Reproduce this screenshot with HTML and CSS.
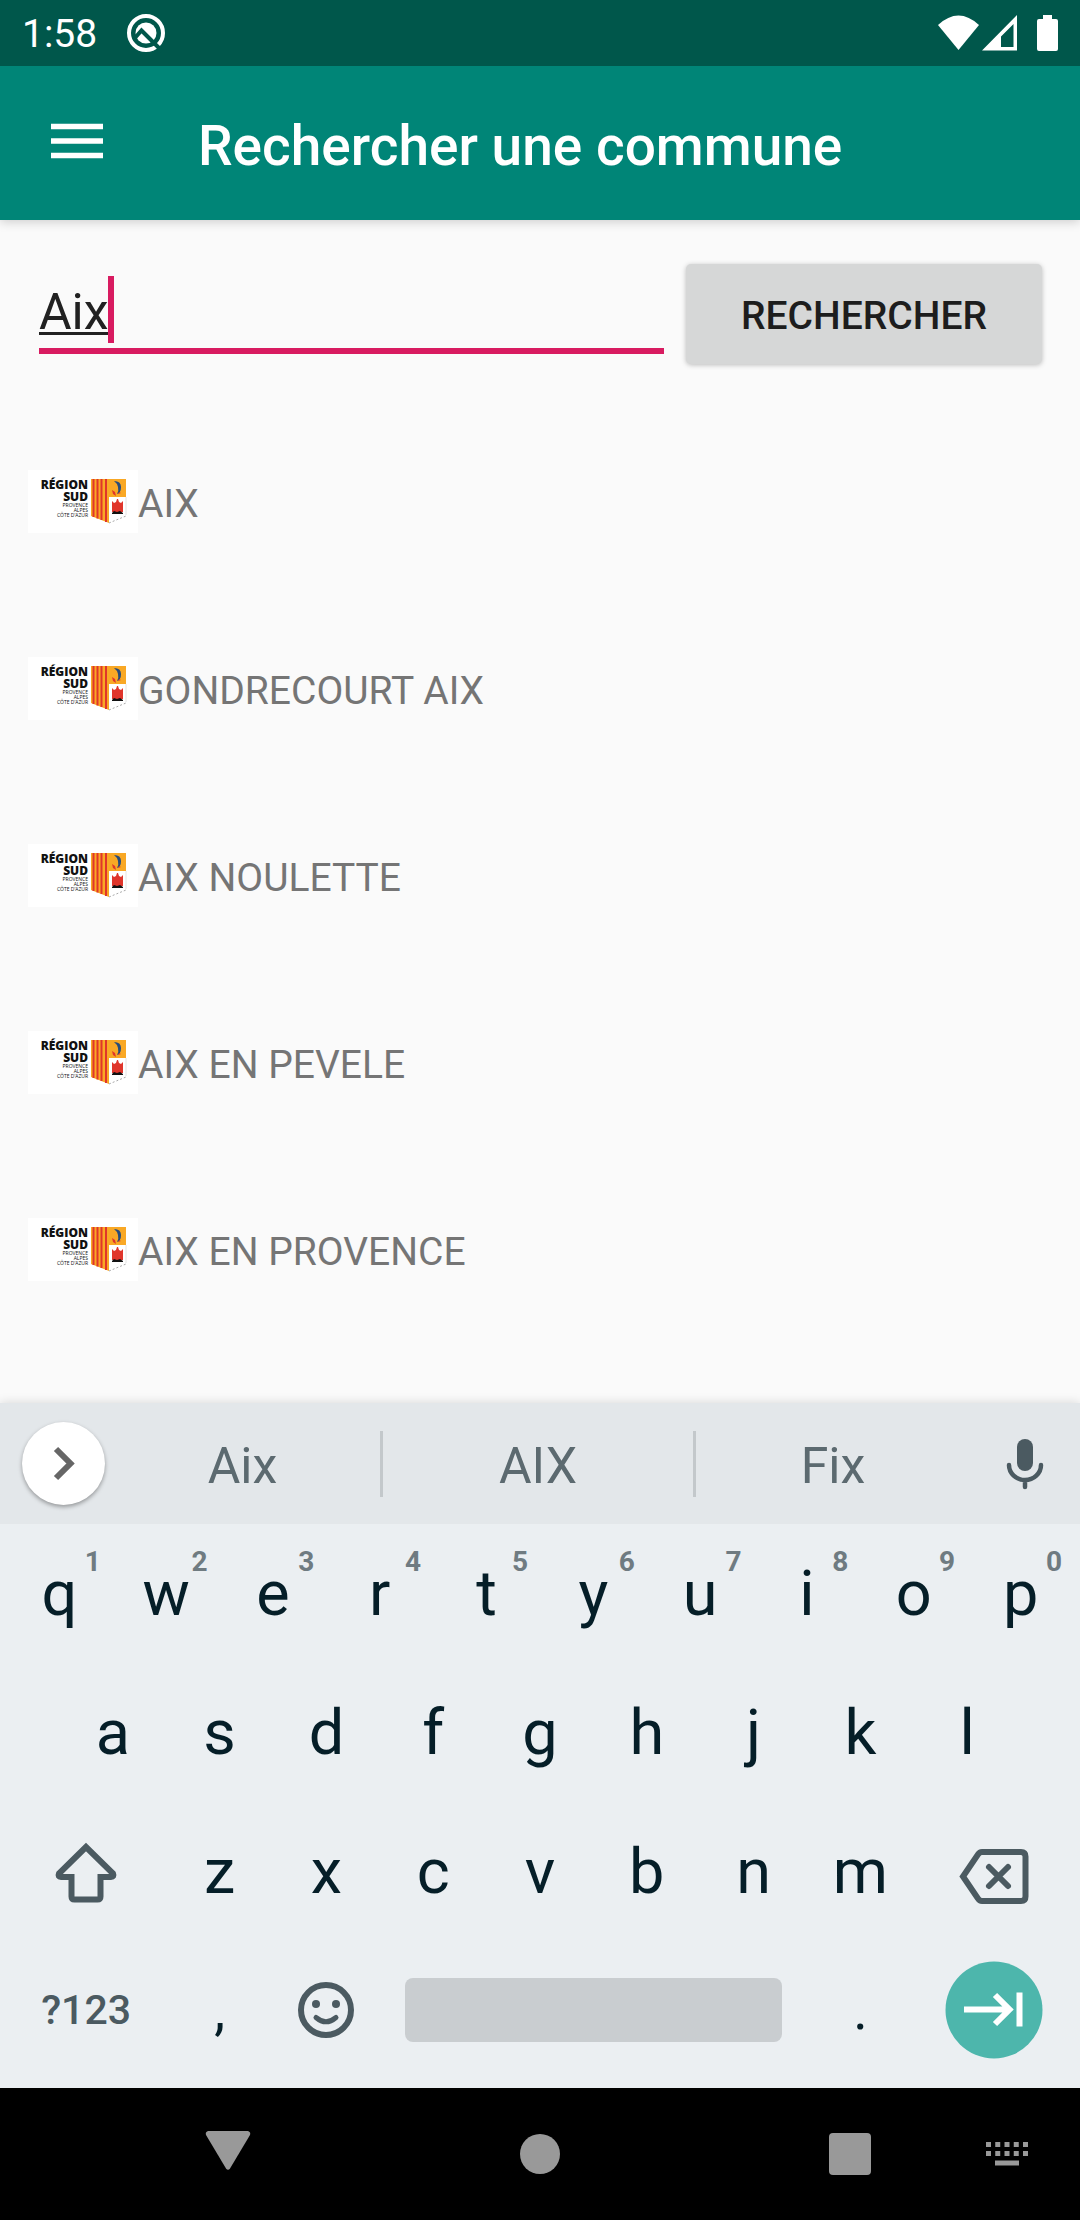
FILE: index.html
```html
<!DOCTYPE html>
<html lang="fr">
<head>
<meta charset="utf-8">
<meta name="viewport" content="width=device-width">
<title>Rechercher une commune</title>
<link rel="stylesheet" href="styles.css">
</head>
<body>
<svg class="defs" aria-hidden="true">
  <symbol id="shield" viewBox="0 0 36 45">
    <path d="M0 0H18V44L0 37Z" fill="#f9a825"/>
    <path d="M2.500 0V38M6.500 0V39.500M10.500 0V41M15 0V43" stroke="#e0352b" stroke-width="2"/>
    <path d="M18 0H35V18H18Z" fill="#f9a825"/>
    <path d="M23 2q7 0 7 6t-4 7q2-3 1-7t-4-6z" fill="#274b7a"/>
    <path d="M21 11l3 2 1 4-3-2zM28 13l2 1-3 1z" fill="#e0352b"/>
    <path d="M21 22l2 2 2-1 1-3h1l1 3 2 1 2-2v11H21z" fill="#e0352b"/>
    <path d="M21 34l2-2 3 1 3-1 3 2v1H21z" fill="#111"/>
    <path d="M18 44L35 37" fill="none" stroke="#aaa" stroke-dasharray="2 2"/>
    <path d="M35 18V36" fill="none" stroke="#e4e4e4"/>
  </symbol>
</svg>

<header>
  <div class="status-bar">
    <span class="clock">1:58</span>
    <svg width="40" height="40" viewBox="0 0 40 40" aria-hidden="true">
      <circle cx="20" cy="20" r="17" fill="none" stroke="#fff" stroke-width="4"/>
      <circle cx="20" cy="20" r="10.500" fill="#fff"/>
      <path d="M8 26l7.500-8.500L36 38" fill="none" stroke="#00574b" stroke-width="4"/>
    </svg>
    <span class="spacer"></span>
    <svg width="120" height="38" viewBox="0 0 120 38" fill="#fff" aria-hidden="true">
      <path d="M0 11Q20.500-8 41 11L20.500 36Z"/>
      <path fill-rule="evenodd" d="M44 36.500L79 1V36.500ZM63 33H75.500V10L63 22.500Z"/>
      <path d="M105 1h9v4h4a2 2 0 0 1 2 2v28a2 2 0 0 1-2 2h-17a2 2 0 0 1-2-2V7a2 2 0 0 1 2-2h4z"/>
    </svg>
  </div>
  <div class="app-bar">
    <button class="menu" aria-label="Menu">
      <svg width="52" height="36" viewBox="0 0 52 36"><path d="M0 3.500H52M0 18H52M0 32.500H52" stroke="#fff" stroke-width="5.500"/></svg>
    </button>
    <h1>Rechercher une commune</h1>
  </div>
</header>

<main>
  <form class="search">
    <div class="field">
      <input type="text" value="Aix" aria-label="Nom de la commune">
      <span class="caret"></span>
    </div>
    <button class="submit" type="button">RECHERCHER</button>
  </form>
  <ul class="results">
    <li>
      <div class="logo">
        <div class="logo-text"><b>RÉGION<br>SUD</b><small>PROVENCE<br>ALPES<br>CÔTE D’AZUR</small></div>
        <svg width="36" height="45"><use href="#shield"/></svg>
      </div>
      <span class="name">AIX</span>
    </li>
    <li>
      <div class="logo">
        <div class="logo-text"><b>RÉGION<br>SUD</b><small>PROVENCE<br>ALPES<br>CÔTE D’AZUR</small></div>
        <svg width="36" height="45"><use href="#shield"/></svg>
      </div>
      <span class="name">GONDRECOURT AIX</span>
    </li>
    <li>
      <div class="logo">
        <div class="logo-text"><b>RÉGION<br>SUD</b><small>PROVENCE<br>ALPES<br>CÔTE D’AZUR</small></div>
        <svg width="36" height="45"><use href="#shield"/></svg>
      </div>
      <span class="name">AIX NOULETTE</span>
    </li>
    <li>
      <div class="logo">
        <div class="logo-text"><b>RÉGION<br>SUD</b><small>PROVENCE<br>ALPES<br>CÔTE D’AZUR</small></div>
        <svg width="36" height="45"><use href="#shield"/></svg>
      </div>
      <span class="name">AIX EN PEVELE</span>
    </li>
    <li>
      <div class="logo">
        <div class="logo-text"><b>RÉGION<br>SUD</b><small>PROVENCE<br>ALPES<br>CÔTE D’AZUR</small></div>
        <svg width="36" height="45"><use href="#shield"/></svg>
      </div>
      <span class="name">AIX EN PROVENCE</span>
    </li>
  </ul>
</main>

<section class="keyboard" aria-label="Clavier">
  <div class="suggestions">
    <button class="expand" aria-label="Plus">
      <svg width="83" height="83" viewBox="0 0 83 83"><path d="M34 27L48.500 41.500 34 56" fill="none" stroke="#666" stroke-width="6"/></svg>
    </button>
    <button class="word">Aix</button>
    <span class="divider"></span>
    <button class="word">AIX</button>
    <span class="divider"></span>
    <button class="word">Fix</button>
    <button class="mic" aria-label="Dictée">
      <svg width="40" height="52" viewBox="0 0 40 52"><rect x="12" y="1" width="16" height="32" rx="8" fill="#4b5a61"/><path d="M4 27a16 15 0 0 0 32 0M20 42V49" fill="none" stroke="#4b5a61" stroke-width="4.500" stroke-linecap="round"/></svg>
    </button>
  </div>
  <div class="keys">
    <div class="row">
      <button class="key">q<span class="hint">1</span></button>
      <button class="key">w<span class="hint">2</span></button>
      <button class="key">e<span class="hint">3</span></button>
      <button class="key">r<span class="hint">4</span></button>
      <button class="key">t<span class="hint">5</span></button>
      <button class="key">y<span class="hint">6</span></button>
      <button class="key">u<span class="hint">7</span></button>
      <button class="key">i<span class="hint">8</span></button>
      <button class="key">o<span class="hint">9</span></button>
      <button class="key">p<span class="hint">0</span></button>
    </div>
    <div class="row">
      <span class="half"></span>
      <button class="key">a</button>
      <button class="key">s</button>
      <button class="key">d</button>
      <button class="key">f</button>
      <button class="key">g</button>
      <button class="key">h</button>
      <button class="key">j</button>
      <button class="key">k</button>
      <button class="key">l</button>
      <span class="half"></span>
    </div>
    <div class="row">
      <button class="key wide" aria-label="Majuscule">
        <svg width="64" height="68" viewBox="0 0 64 68"><path d="M32 10L5 36.500Q3.500 40 7 40H17.500V59.500Q17.500 62.500 20.500 62.500H43.500Q46.500 62.500 46.500 59.500V40H57Q60.500 40 59 36.500Z" fill="none" stroke="#4b5a61" stroke-width="6"/></svg>
      </button>
      <button class="key">z</button>
      <button class="key">x</button>
      <button class="key">c</button>
      <button class="key">v</button>
      <button class="key">b</button>
      <button class="key">n</button>
      <button class="key">m</button>
      <button class="key wide" aria-label="Effacer">
        <svg width="72" height="68" viewBox="0 0 72 68" fill="none" stroke="#4b5a61" stroke-width="6"><path d="M24 15H63q4.500 0 4.500 4.500V59.500q0 4.500-4.500 4.500H24q-2.500 0-4-2.500L5 39.500 20 17.500q1.500-2.500 4-2.500z"/><path d="M31 30L50 49M50 30L31 49" stroke-linecap="round"/></svg>
      </button>
    </div>
    <div class="row">
      <button class="key wide symbols">?123</button>
      <button class="key punct">,</button>
      <button class="key" aria-label="Emoji">
        <svg width="58" height="58" viewBox="0 0 58 58" fill="none" stroke="#4b5a61"><circle cx="29" cy="29" r="25" stroke-width="6"/><circle cx="19" cy="23" r="4" fill="#4b5a61" stroke="none"/><circle cx="39" cy="23" r="4" fill="#4b5a61" stroke="none"/><path d="M19 36.500Q29 45 39 36.500" stroke-width="5" stroke-linecap="round"/></svg>
      </button>
      <button class="key space" aria-label="Espace"><span class="space-bar"></span></button>
      <button class="key punct">.</button>
      <button class="key wide" aria-label="Suivant">
        <svg width="98" height="98" viewBox="0 0 98 98"><circle cx="49" cy="49" r="48.500" fill="#4db6ac"/><path d="M19 48.500H65M50 34L64.500 48.500 50 63M74.500 31.500V65.500" fill="none" stroke="#fff" stroke-width="6"/></svg>
      </button>
    </div>
  </div>
</section>

<nav class="nav-bar">
  <button aria-label="Retour"><svg width="46" height="46" viewBox="0 0 46 46"><path d="M3 0H43Q46 1 45 4L25 37.500Q23 40 21 37.500L1 4Q0 1 3 0Z" fill="#999"/></svg></button>
  <button aria-label="Accueil"><svg width="40" height="40" viewBox="0 0 40 40"><circle cx="20" cy="20" r="20" fill="#999"/></svg></button>
  <button aria-label="Applications récentes"><svg width="42" height="42" viewBox="0 0 42 42"><rect width="42" height="42" rx="4" fill="#999"/></svg></button>
  <button aria-label="Choisir le clavier"><svg width="42" height="24" viewBox="0 0 42 24"><path d="M0 2.500H42M0 11.500H42" stroke="#999" stroke-width="5" stroke-dasharray="5 4.250"/><path d="M9 21H33" stroke="#999" stroke-width="5"/></svg></button>
</nav>
</body>
</html>
```
FILE: styles.css
```css
* {
  box-sizing: border-box;
}

body {
  margin: 0;
  min-height: 100vh;
  display: flex;
  flex-direction: column;
  background: #fafafa;
  font-family: Roboto, sans-serif;
}

button {
  margin: 0;
  padding: 0;
  border: 0;
  background: none;
  font: inherit;
  color: inherit;
}

svg {
  display: block;
}

.defs {
  position: absolute;
  width: 0;
  height: 0;
}

/* Header */

header {
  box-shadow: 0 2px 10px rgba(0, 0, 0, 0.18);
}

.status-bar {
  display: flex;
  align-items: center;
  height: 66px;
  padding: 0 22px;
  background: #00574b;
  color: #fff;
}

.clock {
  width: 104px;
  padding-top: 2px;
  font-size: 39px;
}

.spacer {
  flex: 1;
}

.app-bar {
  display: flex;
  align-items: center;
  height: 154px;
  padding: 0 51px 4px;
  background: #008577;
  color: #fff;
}

.menu {
  width: 147px;
}

h1 {
  margin: 0;
  padding-top: 10px;
  font-size: 55px;
  font-weight: 500;
}

/* Search form and results */

main {
  flex: 1;
}

.search {
  display: flex;
  align-items: flex-end;
  gap: 22px;
  padding: 44px 38px 44px 39px;
}

.field {
  position: relative;
  flex: 1;
  margin-bottom: 10px;
}

.field input {
  display: block;
  width: 100%;
  padding: 0 0 6px;
  border: 0;
  border-bottom: 6px solid #d81b60;
  outline: 0;
  background: none;
  font: 50px/59px Roboto, sans-serif;
  color: #212121;
  text-decoration: underline 3px;
  text-underline-offset: 3px;
}

.caret {
  position: absolute;
  top: -7px;
  left: 69px;
  width: 6px;
  height: 67px;
  background: #d81b60;
}

.submit {
  width: 356px;
  height: 100px;
  padding-top: 4px;
  border-radius: 5px;
  background: #d6d7d7;
  box-shadow: 0 1px 5px rgba(0, 0, 0, 0.25);
  font-size: 39px;
  font-weight: 500;
  color: #1d1d1d;
}

.results {
  margin: 0;
  padding: 0;
  list-style: none;
}

.results li {
  display: flex;
  align-items: center;
  height: 187px;
  padding: 0 28px;
}

.name {
  padding-top: 4px;
  font-size: 39px;
  color: #757575;
}

.logo {
  display: flex;
  justify-content: flex-end;
  gap: 3px;
  width: 110px;
  height: 63px;
  padding: 9px 11px 0 0;
  background: #fff;
}

.logo-text {
  font-family: "Open Sans", sans-serif;
  text-align: right;
  white-space: nowrap;
  color: #111;
}

.logo-text b {
  display: block;
  font-size: 12px;
  font-weight: 800;
  line-height: 12px;
}

.logo-text small {
  display: block;
  font-size: 5px;
  line-height: 5px;
}

/* Keyboard */

.keyboard {
  background: #ebeff2;
  color: #051e28;
  box-shadow: 0 0 10px rgba(0, 0, 0, 0.15);
}

.suggestions {
  display: grid;
  grid-template-columns: 105px 275fr 3px 310fr 3px 274fr 110px;
  align-items: center;
  height: 121px;
  background: #e3e7ea;
}

.expand {
  justify-self: end;
  border-radius: 50%;
  background: #fff;
  box-shadow: 0 2px 4px rgba(0, 0, 0, 0.35);
}

.word {
  padding-top: 5px;
  font-size: 50px;
  color: #5c6a70;
}

.divider {
  height: 66px;
  background: #c3c8cb;
}

.mic {
  justify-self: center;
}

.keys {
  display: grid;
  gap: 1px;
  padding: 0 6px 9px;
}

.row {
  display: flex;
  height: 138px;
}

.key {
  position: relative;
  display: flex;
  align-items: center;
  justify-content: center;
  flex: 2 1 0;
  min-width: 0;
  font-size: 63px;
}

.half {
  flex: 1 1 0;
}

.wide {
  flex-grow: 3;
}

.hint {
  position: absolute;
  top: 21px;
  right: 12px;
  font-size: 28px;
  font-weight: 700;
  color: #6f7b81;
}

.symbols {
  font-size: 41px;
  font-weight: 500;
  color: #4b5a61;
}

.punct {
  font-size: 55px;
}

.space {
  flex-grow: 8;
}

.space-bar {
  flex: 1;
  height: 64px;
  margin: 0 25px;
  border-radius: 8px;
  background: #c9cdd0;
}

/* System navigation */

.nav-bar {
  display: grid;
  grid-template-columns: 212fr 412fr 208fr 106fr;
  align-items: center;
  justify-items: center;
  height: 132px;
  padding: 0 20px 0 122px;
  background: #000;
}
```
